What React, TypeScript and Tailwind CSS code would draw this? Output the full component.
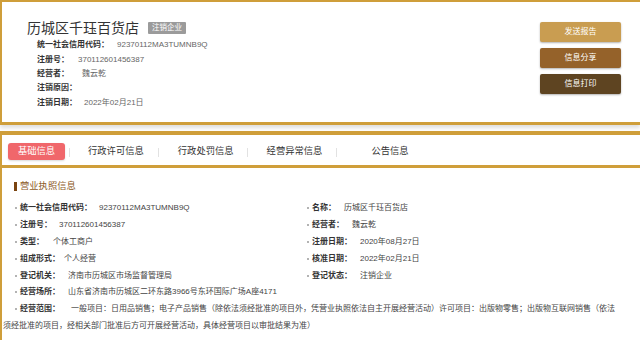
import React from 'react';

const gold = 'border-[#cf9e3a]';

const topRows = [
    { label: '统一社会信用代码：', value: '92370112MA3TUMNB9Q', w: 'w-[80px]' },
    { label: '注册号：', value: '370112601456387', w: 'w-[41px]' },
    { label: '经营者：', value: '魏云乾', w: 'w-[45px]' },
    { label: '注销原因：', value: '', w: 'w-[47px]' },
    { label: '注销日期：', value: '2022年02月21日', w: 'w-[47px]' },
];

const leftRows = [
    { label: '统一社会信用代码：', value: '92370112MA3TUMNB9Q', w: 'w-[79px]' },
    { label: '注册号：', value: '370112601456387', w: 'w-[39px]' },
    { label: '类型：', value: '个体工商户', w: 'w-[33px]' },
    { label: '组成形式：', value: '个人经营', w: 'w-[44px]' },
    { label: '登记机关：', value: '济南市历城区市场监督管理局', w: 'w-[48px]' },
];

const rightRows = [
    { label: '名称：', value: '历城区千珏百货店', w: 'w-[32px]' },
    { label: '经营者：', value: '魏云乾', w: 'w-[40px]' },
    { label: '注册日期：', value: '2020年08月27日', w: 'w-[48px]' },
    { label: '核准日期：', value: '2022年02月21日', w: 'w-[48px]' },
    { label: '登记状态：', value: '注销企业', w: 'w-[48px]' },
];

const tabs = [
    { name: '行政许可信息', ml: 'ml-[18px]', mr: 'mr-[14px]' },
    { name: '行政处罚信息', ml: 'ml-[19px]', mr: 'mr-[13px]' },
    { name: '经营异常信息', ml: 'ml-[19px]', mr: 'mr-[14px]' },
];

const Field = ({ label, value, w }: { label: string; value: string; w: string }) => (
    <div className="h-[16.8px] flex items-center whitespace-nowrap">
        <span className="w-[2px] h-[2px] rounded-full bg-[#9a9a9a] mr-[3px] shrink-0" />
        <span className={`${w} shrink-0 font-bold text-[#333]`}>{label}</span>
        <span className="text-[#444]">{value}</span>
    </div>
);

export default function App() {
    return (
        <div className="w-[640px] h-[340px] overflow-hidden bg-white font-['Liberation_Sans','Noto_Sans_CJK_SC',sans-serif]">
            {/* header card */}
            <div className={`border-t-2 border-l-2 border-b-[3px] ${gold} bg-white shadow-[0_3px_4px_rgba(0,0,0,0.13)] flex justify-between`}>
                <div className="pl-[25px] pt-[16px] pb-[12px]">
                    <div className="flex items-center h-[20px]">
                        <span className="text-[14px] text-[#333]">历城区千珏百货店</span>
                        <span className="ml-[9px] bg-[#9b9b9b] text-white text-[7.5px] px-[4px] h-[12px] leading-[12px] rounded-[1px]">注销企业</span>
                    </div>
                    <div className="pl-[10px] text-[8px]">
                        {topRows.map(r => (
                            <div key={r.label} className="h-[14.4px] flex items-center whitespace-nowrap">
                                <span className={`${r.w} shrink-0 font-bold text-[#333]`}>{r.label}</span>
                                <span className="text-[#666]">{r.value}</span>
                            </div>
                        ))}
                    </div>
                </div>
                <div className="pt-[20px] pr-[19px] flex flex-col gap-[6px]">
                    <button className="w-[81px] h-[20px] rounded-[2px] bg-[#c99d51] text-white text-[8px] shadow-[0_1px_2px_rgba(0,0,0,0.3)]">发送报告</button>
                    <button className="w-[81px] h-[20px] rounded-[2px] bg-[#95622a] text-white text-[8px] shadow-[0_1px_2px_rgba(0,0,0,0.3)]">信息分享</button>
                    <button className="w-[81px] h-[20px] rounded-[2px] bg-[#5e4421] text-white text-[8px] shadow-[0_1px_2px_rgba(0,0,0,0.3)]">信息打印</button>
                </div>
            </div>

            {/* tab bar */}
            <div className={`mt-[6px] h-[37px] border-t-4 border-b-[3px] border-l-2 ${gold} flex items-start pt-[8px] text-[9.3px] text-[#333]`}>
                <div className="ml-[6px] w-[57px] h-[17px] leading-[17px] text-center bg-[#f0676b] text-white rounded-[3px] shadow-[0_1px_2px_rgba(0,0,0,0.15)]">基础信息</div>
                <div className="ml-[4px] mt-[5px] w-px h-[9px] bg-[#e2e2e2]" />
                {tabs.map(t => (
                    <React.Fragment key={t.name}>
                        <div className={`${t.ml} ${t.mr} h-[17px] leading-[17px] whitespace-nowrap`}>{t.name}</div>
                        <div className="mt-[5px] w-px h-[9px] bg-[#e2e2e2]" />
                    </React.Fragment>
                ))}
                <div className="ml-[34px] h-[17px] leading-[17px] whitespace-nowrap">公告信息</div>
            </div>

            {/* license info */}
            <div className={`border-l-2 ${gold} h-[200px] pt-[12px]`}>
                <div className="pl-[12px] h-[14px] flex items-center">
                    <span className="w-[3px] h-[9px] bg-[#7a4410]" />
                    <span className="ml-[3px] text-[9.3px] text-[#8d5b1f]">营业执照信息</span>
                </div>
                <div className="mt-[6px] text-[8px]">
                    <div className="pl-[13px] flex">
                        <div className="w-[292px]">
                            {leftRows.map(r => <Field key={r.label} {...r} />)}
                        </div>
                        <div>
                            {rightRows.map(r => <Field key={r.label} {...r} />)}
                        </div>
                    </div>
                    <div className="pl-[13px]">
                        <Field label="经营场所：" value="山东省济南市历城区二环东路3966号东环国际广场A座4171" w="w-[48px]" />
                        <Field label="经营范围：" value="一般项目：日用品销售；电子产品销售（除依法须经批准的项目外，凭营业执照依法自主开展经营活动）许可项目：出版物零售；出版物互联网销售（依法" w="w-[51px]" />
                    </div>
                    <div className="pl-[1px] h-[15px] leading-[15px] text-[#444] whitespace-nowrap">
                        须经批准的项目，经相关部门批准后方可开展经营活动，具体经营项目以审批结果为准）
                    </div>
                </div>
            </div>
        </div>
    );
}
